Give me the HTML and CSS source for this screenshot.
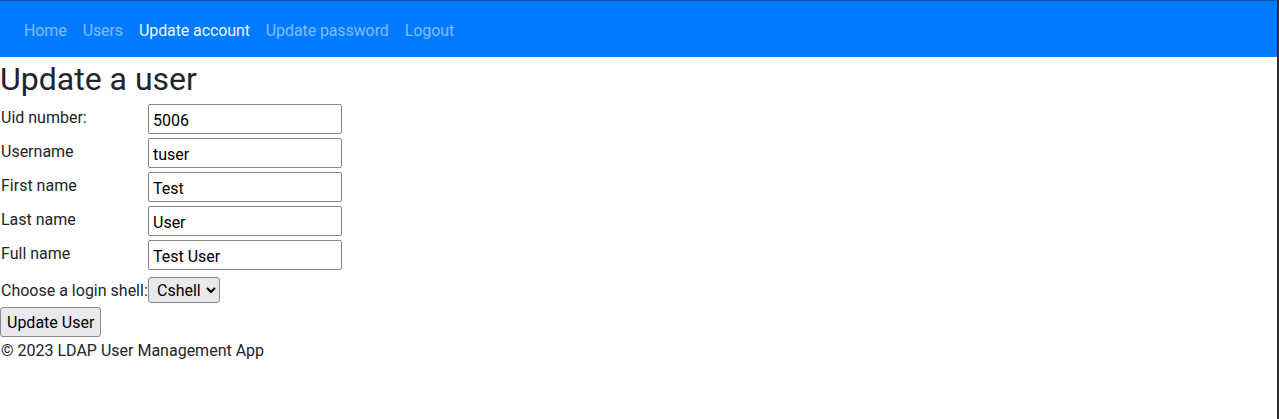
FILE: index.html
```html
<!DOCTYPE html>
<html lang="en">
<head>
<meta charset="utf-8">
<title>Update a user</title>
<link rel="stylesheet" href="styles.css">
</head>
<body>
<div class="frame">
  <nav class="navbar">
    <ul class="nav">
      <li><a class="nav-link" href="#">Home</a></li>
      <li><a class="nav-link" href="#">Users</a></li>
      <li><a class="nav-link active" href="#">Update account</a></li>
      <li><a class="nav-link" href="#">Update password</a></li>
      <li><a class="nav-link" href="#">Logout</a></li>
    </ul>
  </nav>
  <main class="content">
    <h1 class="title">Update a user</h1>
    <form class="user-form">
      <div class="field-grid">
        <label class="field-label" for="uid">Uid number:</label>
        <input class="field-input" id="uid" type="text" value="5006">
        <label class="field-label" for="username">Username</label>
        <input class="field-input" id="username" type="text" value="tuser">
        <label class="field-label" for="first">First name</label>
        <input class="field-input" id="first" type="text" value="Test">
        <label class="field-label" for="last">Last name</label>
        <input class="field-input" id="last" type="text" value="User">
        <label class="field-label" for="full">Full name</label>
        <input class="field-input" id="full" type="text" value="Test User">
      </div>
      <div class="shell-row">
        <label class="field-label" for="shell">Choose a login shell:</label>
        <select class="shell-select" id="shell">
          <option>Cshell</option>
        </select>
      </div>
      <button class="submit-btn" type="submit">Update User</button>
    </form>
    <footer class="footer">© 2023 LDAP User Management App</footer>
  </main>
</div>
</body>
</html>
```

FILE: styles.css
```css
* {
  box-sizing: border-box;
}

html, body {
  margin: 0;
  padding: 0;
  background: #fff;
}

body {
  font-family: "Segoe UI", Roboto, "Noto Sans", sans-serif;
  font-size: 16px;
  line-height: 24px;
  color: #212529;
}

.frame {
  min-height: 100vh;
  border-top: 1px solid #1b4f9e;
  border-right: 2px solid #2e2e2e;
}

.navbar {
  background: #007bff;
  height: 56px;
  padding: 10px 16px 6px;
  display: flex;
  align-items: center;
}

.nav {
  list-style: none;
  margin: 0;
  padding: 0;
  display: flex;
}

.nav-link {
  display: block;
  padding: 8px;
  color: rgba(255, 255, 255, 0.5);
  text-decoration: none;
  letter-spacing: -0.1px;
}

.nav-link.active {
  color: rgba(255, 255, 255, 0.95);
}

.content {
  padding: 0;
}

.title {
  margin: 0 0 6px;
  padding-top: 3px;
  font-size: 32px;
  line-height: 38px;
  font-weight: 400;
  color: #212529;
}

.user-form {
  margin: 0;
}

.field-grid {
  display: grid;
  grid-template-columns: 148px 194px;
  row-gap: 4px;
  align-items: start;
}

.field-label {
  display: block;
  padding-left: 1px;
  padding-top: 2px;
  line-height: 24px;
}

.field-input {
  width: 194px;
  height: 30px;
  margin: 0;
  padding: 2px 4px 0;
  border: 1px solid #858585;
  border-radius: 2px;
  font-family: inherit;
  font-size: 16px;
  color: #000;
  background: #fff;
}

.shell-row {
  display: flex;
  align-items: baseline;
  margin-top: 7px;
}

.shell-row .field-label {
  width: 148px;
  flex: none;
  padding-top: 0;
  white-space: nowrap;
}

.shell-select {
  width: auto;
  height: 26px;
  margin: 0;
  padding: 1px 2px 0 4px;
  border: 1px solid #8a8a8a;
  border-radius: 3px;
  background: #e9e9ed;
  font-family: inherit;
  font-size: 16px;
  color: #000;
}

.submit-btn {
  display: block;
  margin: 4px 0 0;
  height: 30px;
  padding: 1px 6px 0;
  border: 1px solid #8a8a8a;
  border-radius: 3px;
  background: #e9e9ed;
  font-family: inherit;
  font-size: 16px;
  color: #000;
  white-space: nowrap;
}

.footer {
  padding-left: 1px;
  padding-top: 2px;
  line-height: 24px;
}
```
